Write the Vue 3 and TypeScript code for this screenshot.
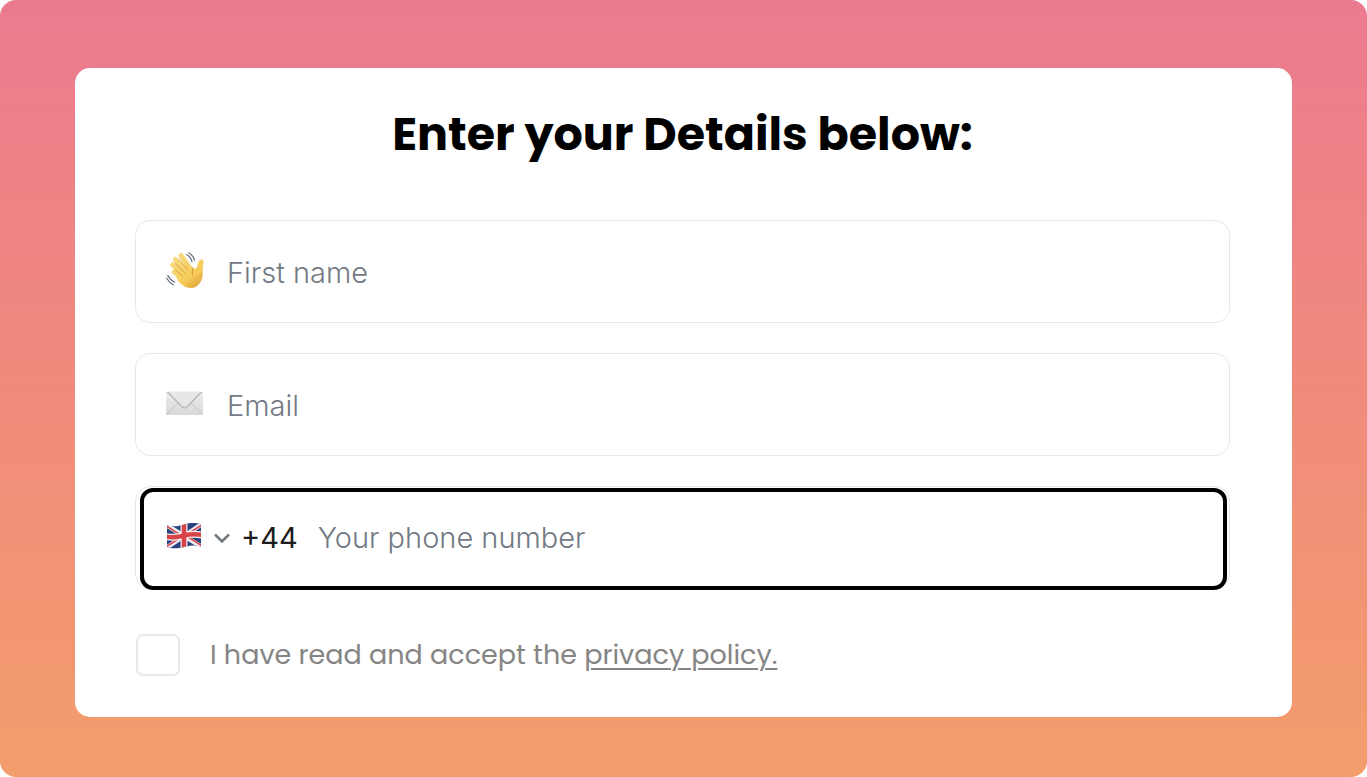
<script setup lang="ts">
import { ref } from 'vue'

const firstName = ref('')
const email = ref('')
const country = ref('GB')
const phone = ref('')
const accepted = ref(false)
</script>

<template>
  <main class="page">
    <form class="card" @submit.prevent>
      <h1>Enter your Details below:</h1>

      <div class="fields">
        <label class="field">
          <svg class="icon" viewBox="0 0 40 40" aria-hidden="true">
            <defs>
              <linearGradient id="skin" gradientUnits="userSpaceOnUse" x1="8" y1="4" x2="34" y2="37">
                <stop offset="0" stop-color="#f9dc84" />
                <stop offset="0.65" stop-color="#f6cc5a" />
                <stop offset="1" stop-color="#dc9d31" />
              </linearGradient>
            </defs>
            <path class="finger" d="M8.3 20.8L17 28M6.8 14L18 25M9.3 8.5L21 22M15 4.5L25 19" />
            <path fill="url(#skin)" d="M26.6 16.6C28.8 18.8 30.6 17.5 31.4 14.4C32.2 11.2 33.3 8.4 35.6 8.6C38.3 8.9 37.8 11.8 37.2 14.4C36.6 17 36.8 19.5 36.7 23C36.5 30 32.5 36.8 25 37C20 37.1 16 34.3 12 30L9 23L18 14Z" />
            <path class="crease" d="M9.4 18.9L16.5 25.3M9 12.4L18.8 22M13.2 8.6L21.8 18.8M26.6 16.6C27.3 18.5 25.8 20.8 26.7 24" />
            <path class="motion" d="M20.6 3.4C23.2 4.9 25.3 7.6 26 10.6M22.8 1.8C25.6 3.4 27.8 6.2 28.5 9.4M1.8 24.6C3.4 27.4 5.8 29.8 8.6 31.2M0.8 27.2C2.2 30 4.6 32.4 7.4 33.8" />
          </svg>
          <input v-model="firstName" type="text" placeholder="First name" aria-label="First name" />
        </label>

        <label class="field">
          <svg class="icon" viewBox="0 0 40 40" aria-hidden="true">
            <defs>
              <linearGradient id="paper" x1="0" y1="0" x2="0" y2="1">
                <stop offset="0" stop-color="#eeeeee" />
                <stop offset="1" stop-color="#d8d8d8" />
              </linearGradient>
            </defs>
            <path fill="url(#paper)" d="M0 7H37V31H0Z" />
            <path fill="none" stroke="#c8c8c8" stroke-width="1" d="M0.5 30.5L13.5 18M36.5 30.5L23.5 18" />
            <path fill="#e7e7e7" stroke="#b6b6b6" stroke-width="1.2" d="M1 7.5L15.7 22.5Q18.5 25.2 21.3 22.5L36 7.5" />
            <path fill="none" stroke="#f5f5f5" d="M0 7.5H37" />
          </svg>
          <input v-model="email" type="email" placeholder="Email" aria-label="Email" />
        </label>

        <div class="field phone">
          <div class="country">
            <svg class="flag" viewBox="0 0 36 28" aria-hidden="true">
              <defs>
                <clipPath id="wave">
                  <path d="M1 3.2C8 5.4 13 3.8 18 2.5C24 .8 29 .6 35 2V24.5C29 22.8 24 23.3 18 24.9C12 26.5 7 27 1 25Z" />
                </clipPath>
              </defs>
              <g clip-path="url(#wave)">
                <path fill="#29417f" d="M0 0H36V28H0Z" />
                <path stroke="#f0edf0" stroke-width="4.5" d="M0 3L36 25M0 26L36 2" />
                <path stroke="#d54c51" stroke-width="1.7" d="M0 4L17 14.5M19 13L36 24M0 25L17 14M19 13.5L36 3" />
                <path fill="none" stroke="#f4eff0" stroke-width="7" d="M18 0V28M0 14.5C8 16.5 13 14.5 18 13.5C25 12 29 11.7 36 13" />
                <path fill="none" stroke="#d84348" stroke-width="4.5" d="M18 0V28M0 14.5C8 16.5 13 14.5 18 13.5C25 12 29 11.7 36 13" />
              </g>
            </svg>
            <svg class="chevron" viewBox="0 0 16 10" aria-hidden="true">
              <path d="M1 1.5L8 8.5L15 1.5" />
            </svg>
            <select v-model="country" aria-label="Country code">
              <option value="GB">+44</option>
            </select>
          </div>
          <span class="code">+44</span>
          <input v-model="phone" type="tel" placeholder="Your phone number" aria-label="Your phone number" />
        </div>
      </div>

      <div class="consent">
        <input id="accept" v-model="accepted" type="checkbox" />
        <label for="accept">I have read and accept the <a href="#privacy">privacy policy.</a></label>
      </div>
    </form>
  </main>
</template>

<style>
body {
  background: #fff;
}
</style>

<style scoped>
.page {
  box-sizing: border-box;
  min-height: 100vh;
  padding: 68px 75px 60px;
  border-radius: 16px;
  background: linear-gradient(#ec7a8f, #f08b7c 50%, #f39d6c);
  font-family: Poppins, Inter, "Liberation Sans", sans-serif;
}

.card {
  box-sizing: border-box;
  padding: 36px 62px 41px 60px;
  border-radius: 15px;
  background: #fff;
}

h1 {
  margin: 0 0 56px;
  color: #000;
  font-size: 46px;
  line-height: 60px;
  font-weight: 700;
  text-align: center;
}

.fields {
  display: grid;
  gap: 30px;
}

.field {
  box-sizing: border-box;
  display: flex;
  align-items: center;
  height: 103px;
  padding: 2px 30px 0;
  border: 1px solid #e7e8ea;
  border-radius: 15px;
}

.icon {
  flex: none;
  width: 40px;
  height: 40px;
  margin: 0 21px 4px 0;
}

.finger {
  fill: none;
  stroke: url(#skin);
  stroke-width: 5;
  stroke-linecap: round;
}

.crease {
  fill: none;
  stroke: #d79e38;
  stroke-width: 1;
  stroke-linecap: round;
}

.motion {
  fill: none;
  stroke: #66727d;
  stroke-width: 1.2;
  stroke-linecap: round;
}

.field input {
  flex: 1;
  min-width: 0;
  height: 60px;
  padding: 0;
  border: 0;
  outline: 0;
  background: transparent;
  color: #1c1c1c;
  font-family: Inter, "Liberation Sans", sans-serif;
  font-size: 29px;
  font-weight: 300;
}

.field input::placeholder {
  color: #737a84;
  opacity: 1;
}

.phone {
  position: relative;
  padding-top: 0;
}

.phone::after {
  content: "";
  position: absolute;
  inset: 1px 2px -2px 4px;
  border: 4px solid #000;
  border-radius: 13px;
  pointer-events: none;
}

.country {
  position: relative;
  display: flex;
  align-items: center;
  gap: 12px;
}

.flag {
  width: 36px;
  height: 28px;
  margin-bottom: 4px;
}

.chevron {
  width: 16px;
  height: 10px;
}

.chevron path {
  fill: none;
  stroke: #747981;
  stroke-width: 2.5;
}

.country select {
  position: absolute;
  inset: 0;
  width: 100%;
  opacity: 0;
}

.code {
  margin: 0 20px 0 11px;
  color: #1c1c1c;
  font-family: Inter, "Liberation Sans", sans-serif;
  font-size: 29px;
  font-weight: 400;
}

.consent {
  display: flex;
  align-items: center;
  gap: 30px;
  margin: 45px 0 0 1px;
  color: #858585;
  font-size: 27px;
  line-height: 40px;
}

.consent input {
  appearance: none;
  flex: none;
  width: 44px;
  height: 42px;
  margin: 0;
  border: 2px solid #e9e9e9;
  border-radius: 7px;
  background: #fff;
}

.consent input:checked {
  background: #858585;
}

.consent a {
  color: inherit;
  text-decoration-thickness: 2px;
  text-underline-offset: 4px;
}
</style>
